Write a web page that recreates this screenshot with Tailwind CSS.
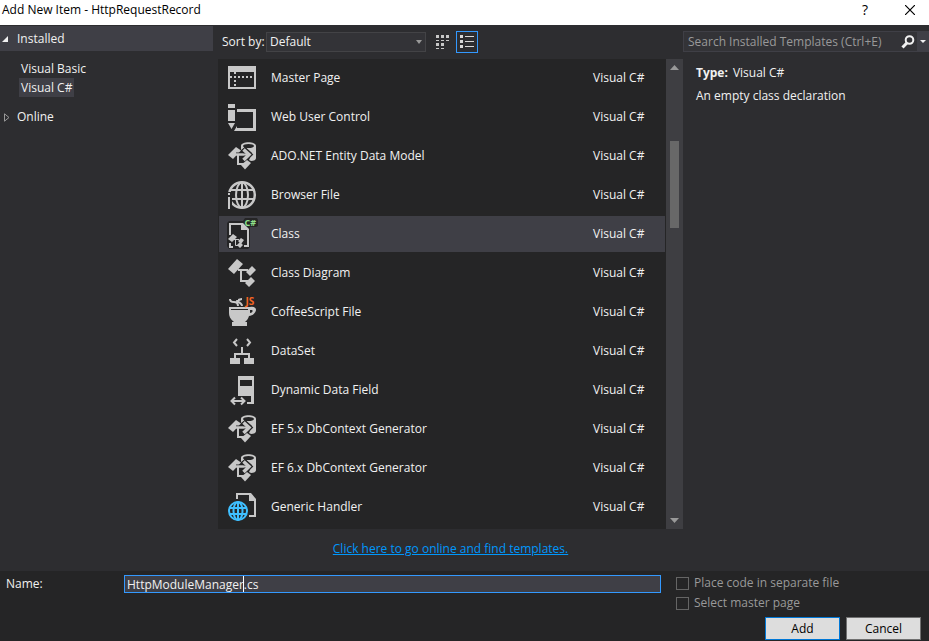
<!DOCTYPE html>
<html lang="en">
<head>
<meta charset="utf-8">
<title>Add New Item - HttpRequestRecord</title>
<script src="https://cdn.jsdelivr.net/npm/@tailwindcss/browser@4"></script>
</head>
<body class="min-h-screen flex flex-col bg-[#2d2d30] text-[#f1f1f1] text-[12px] leading-4 font-['Segoe_UI','Open_Sans',sans-serif]">

<svg class="hidden" aria-hidden="true">
  <symbol id="i-master" viewBox="0 0 32 32">
    <path fill="#c8c8c8" fill-rule="evenodd" d="M2 4h28v23H2zM4 10v15h24V10z"/>
    <path fill="#c8c8c8" d="M4 14h2v2H4zM8 10h2v2H8zM8 14h2v2H8zM8 18h2v2H8zM8 22h2v2H8zM12 14h2v2h-2zM16 14h2v2h-2zM20 14h2v2h-2zM24 14h2v2h-2z"/>
  </symbol>
  <symbol id="i-control" viewBox="0 0 32 32">
    <path fill="#c8c8c8" d="M2 3h7v4H2zM2 9h7v11H2zM2 22h7l-3.500 6zM11 8h19v22H8l3-5v2h16V11H11z"/>
  </symbol>
  <symbol id="i-entity" viewBox="0 0 32 32">
    <path fill="#c8c8c8" d="M15 6c0-5 15-5 15 0v12c0 2-2 3-5 3l-2-1 3-7-7-6-4 3z"/>
    <ellipse cx="22.500" cy="6" rx="5.500" ry="2" fill="#252526"/>
    <path d="M2 15l8-8 5 3.500-8 8.500z" fill="#c8c8c8"/>
    <path d="M10 15h12" fill="none" stroke="#252526" stroke-width="5"/>
    <path d="M10 14.500h12M12 15v9h6" fill="none" stroke="#c8c8c8" stroke-width="2"/>
    <path d="M17 9l6 5.500-6 6" fill="none" stroke="#252526" stroke-width="6"/>
    <path d="M17.500 9.500l5.500 5-5.500 5.500" fill="none" stroke="#c8c8c8" stroke-width="3.500"/>
    <path d="M10 14.500h11" fill="none" stroke="#c8c8c8" stroke-width="2"/>
    <path d="M15 25l6-5 4 3-6 6.500z" fill="#c8c8c8"/>
  </symbol>
  <symbol id="i-globe-i" viewBox="0 0 32 32">
    <g fill="none" stroke="#c8c8c8" stroke-width="2">
      <circle cx="16" cy="16" r="12.800" stroke-width="2.500"/><ellipse cx="16" cy="16" rx="6" ry="12.500"/>
      <path d="M16 3v26M5 11h22M5 20h22"/>
    </g>
    <path fill="#252526" d="M0 13h6v17H0z"/>
    <path fill="#c8c8c8" d="M2 14h2v2H2zM2 18h2v12H2z"/>
  </symbol>
  <symbol id="i-class" viewBox="0 0 32 32">
    <path fill="#252526" d="M3 3h14l2-3h12l1 2v6l-2 1h-6v20l-2 2H3l-2-3V5z"/>
    <path fill="none" stroke="#c8c8c8" stroke-width="2" d="M4 17V6h12M22 12v16h-4M4 25v4h3"/>
    <path fill="#c8c8c8" d="M15 5h2l6 6v1h-8z"/>
    <path fill="#c8c8c8" d="M2 21l5-5 4 3-5 5zM12 23l3-3 3 2-3 4zM11 27l3-3 3 3-3 3z"/>
    <path fill="none" stroke="#c8c8c8" d="M8 21.500h5M9.500 21v6.500h3"/>
    <text x="18.500" y="8" font-size="9" font-weight="bold" font-family="Open Sans, sans-serif" fill="#8ee08a">C#</text>
  </symbol>
  <symbol id="i-diagram" viewBox="0 0 32 32">
    <path fill="#c8c8c8" d="M2 12l9-10 6 5-9 10zM20 15l6-6 4 4-6 6zM19 26l6-6 4 4-6 6z"/>
    <path fill="none" stroke="#c8c8c8" stroke-width="2" d="M12 13h10M15 13v11h7"/>
  </symbol>
  <symbol id="i-coffee" viewBox="0 0 32 32">
    <path fill="#c8c8c8" fill-rule="evenodd" d="M3 11h21c4-1 6 1 6 3s-3 6-7 6c-1 3-2 4-4 6h2v4H6v-4h2C4 23 3 20 3 17zM5 13v1h17v-1zM24 14v3c3 0 3-3 2-3z"/>
    <path fill="none" stroke="#c8c8c8" stroke-width="2" d="M4 3c0 3 2 3 4 3s4 1 4 4M11 4c0 2 2 2 3 3s2 1 2 3M16 3c-2 0-2 1-4 1"/>
    <text x="19.500" y="9" font-size="10" font-weight="bold" font-family="Open Sans, sans-serif" fill="#f26522">JS</text>
  </symbol>
  <symbol id="i-dataset" viewBox="0 0 32 32">
    <path fill="none" stroke="#c8c8c8" stroke-width="2" d="M11 4L8 7.500l3 3.500M21 4l3 3.500-3 3.500M16 12v7M9 24v-5h14v5"/>
    <path fill="#c8c8c8" d="M4 23h10v6H4zM18 23h10v6H18z"/>
  </symbol>
  <symbol id="i-field" viewBox="0 0 32 32">
    <path fill="#c8c8c8" fill-rule="evenodd" d="M12 2h16v28h-7v-2h4v-6H12zM14 6v6h12V6z"/>
    <path fill="none" stroke="#c8c8c8" stroke-width="2" d="M6 27h12M9 23.500L5.500 27 9 30.500M15 23.500l3.500 3.500-3.500 3.500"/>
  </symbol>
  <symbol id="i-handler" viewBox="0 0 32 32">
    <path fill="none" stroke="#c8c8c8" stroke-width="2" d="M11 8V3h13M29 9v16h-6"/>
    <path fill="#c8c8c8" d="M23 2h2l5 6v2h-7z"/>
    <circle cx="12" cy="20" r="9" fill="#252526" stroke="#3fbfff" stroke-width="2"/>
    <g fill="none" stroke="#3fbfff" stroke-width="2"><ellipse cx="12" cy="20" rx="4.500" ry="9"/><path d="M12 11v18M4 17h16M4 23h16"/></g>
  </symbol>
</svg>

<header class="h-[25px] shrink-0 flex items-center bg-white text-black pl-[2px] pr-[14px] pb-[5px]">
  <h1 class="grow">Add New Item - HttpRequestRecord</h1>
  <button aria-label="Help" class="w-4 mr-8 text-[14px]">?</button>
  <button aria-label="Close"><svg class="size-[10px]" viewBox="0 0 10 10" stroke="#000" stroke-width="1.200"><path d="M0 0l10 10M10 0L0 10"/></svg></button>
</header>

<main class="grow grid grid-cols-[213px_minmax(0,1fr)_246px]">
  <nav aria-label="Template categories" class="pt-px">
    <button class="w-full h-[25px] flex items-center gap-[9px] bg-[#3f3f46] pl-[2px] pt-px"><svg class="size-[6px]" viewBox="0 0 6 6"><path fill="#f1f1f1" d="M6 0v6H0z"/></svg>Installed</button>
    <ul class="pt-2 pl-[19px]">
      <li><button class="h-[19px] px-[2px]">Visual Basic</button></li>
      <li><button class="h-[19px] px-[2px] bg-[#3f3f46] flex items-center">Visual C#</button></li>
    </ul>
    <button class="mt-2 h-6 flex items-center gap-[7px] pl-[4px]"><svg class="w-[6px] h-[9px]" viewBox="0 0 6 9"><path fill="none" stroke="#999" d="M.5.800v7.400L5 4.500z"/></svg>Online</button>
  </nav>

  <section class="pl-[5px] flex flex-col">
    <div class="h-[34px] flex items-center pl-1">
      <label for="sort" class="w-11 whitespace-nowrap">Sort by:</label>
      <div class="relative">
        <select id="sort" class="appearance-none block w-[160px] h-5 border border-[#434346] bg-[#333337] pl-[3px] leading-4"><option>Default</option></select>
        <svg class="absolute right-1 top-2 w-[6px] h-[4px] pointer-events-none" viewBox="0 0 6 4"><path fill="#999" d="M0 0h6L3 4z"/></svg>
      </div>
      <button aria-label="Small icons" class="ml-[10px]"><svg class="w-[14px] h-[15px]" viewBox="0 0 14 15" fill="#c8c8c8"><path d="M0 0h3v3H0zM5 0h3v3H5zM10 0h3v3h-3zM0 5h3v1H0zM5 5h3v1H5zM10 5h3v1h-3zM0 8h3v3H0zM5 8h3v3H5zM0 13h3v1H0zM5 13h3v1H5z"/></svg></button>
      <button aria-label="Medium icons" class="ml-[6px] size-[22px] border border-[#3399ff] grid place-items-center"><svg class="w-[14px] h-[14px]" viewBox="0 0 14 14" fill="#d8d8d8"><path d="M0 0h3v3H0zM0 5h3v3H0zM0 10h3v3H0zM5 1h9v1H5zM5 6h9v1H5zM5 11h9v1H5z"/></svg></button>
    </div>
    <div class="flex bg-[#252526]">
      <ul role="listbox" aria-label="Templates" class="grow flex flex-col gap-[3px] pt-px pb-[4px] pl-px pr-px
        *:h-9 *:flex *:items-center *:gap-[13px] *:pl-[7px]">
        <li role="option"><svg class="size-8"><use href="#i-master"/></svg><span class="grow">Master Page</span><span class="w-[72px]">Visual C#</span></li>
        <li role="option"><svg class="size-8"><use href="#i-control"/></svg><span class="grow">Web User Control</span><span class="w-[72px]">Visual C#</span></li>
        <li role="option"><svg class="size-8"><use href="#i-entity"/></svg><span class="grow">ADO.NET Entity Data Model</span><span class="w-[72px]">Visual C#</span></li>
        <li role="option"><svg class="size-8"><use href="#i-globe-i"/></svg><span class="grow">Browser File</span><span class="w-[72px]">Visual C#</span></li>
        <li role="option" aria-selected="true" class="bg-[#3f3f46]"><svg class="size-8"><use href="#i-class"/></svg><span class="grow">Class</span><span class="w-[72px]">Visual C#</span></li>
        <li role="option"><svg class="size-8"><use href="#i-diagram"/></svg><span class="grow">Class Diagram</span><span class="w-[72px]">Visual C#</span></li>
        <li role="option"><svg class="size-8"><use href="#i-coffee"/></svg><span class="grow">CoffeeScript File</span><span class="w-[72px]">Visual C#</span></li>
        <li role="option"><svg class="size-8"><use href="#i-dataset"/></svg><span class="grow">DataSet</span><span class="w-[72px]">Visual C#</span></li>
        <li role="option"><svg class="size-8"><use href="#i-field"/></svg><span class="grow">Dynamic Data Field</span><span class="w-[72px]">Visual C#</span></li>
        <li role="option"><svg class="size-8"><use href="#i-entity"/></svg><span class="grow">EF 5.x DbContext Generator</span><span class="w-[72px]">Visual C#</span></li>
        <li role="option"><svg class="size-8"><use href="#i-entity"/></svg><span class="grow">EF 6.x DbContext Generator</span><span class="w-[72px]">Visual C#</span></li>
        <li role="option"><svg class="size-8"><use href="#i-handler"/></svg><span class="grow">Generic Handler</span><span class="w-[72px]">Visual C#</span></li>
      </ul>
      <div class="w-[17px] bg-[#3e3e42] flex flex-col items-center py-[6px]">
        <svg class="w-[9px] h-[5px]" viewBox="0 0 9 5"><path fill="#999" d="M0 5h9L4.500 0z"/></svg>
        <div class="mt-[71px] w-[9px] h-[87px] bg-[#686868]"></div>
        <svg class="mt-auto w-[9px] h-[5px]" viewBox="0 0 9 5"><path fill="#999" d="M0 0h9L4.500 5z"/></svg>
      </div>
    </div>
    <p class="pt-3 pb-[14px] text-center"><a href="#" class="text-[#0097fb] underline">Click here to go online and find templates.</a></p>
  </section>

  <aside class="pt-[6px]">
    <div class="h-[21px] flex border border-r-0 border-[#3f3f46] bg-[#333337]">
      <input type="search" aria-label="Search Installed Templates" placeholder="Search Installed Templates (Ctrl+E)" class="grow min-w-0 pl-1 placeholder:text-[#999999] outline-none">
      <button aria-label="Search" class="w-[18px] grid place-items-center"><svg class="size-[14px]" viewBox="0 0 14 14" fill="none" stroke="#f1f1f1"><circle cx="8.500" cy="5" r="3.800" stroke-width="2"/><path stroke-width="3" d="M5.800 8L1.500 12.500"/></svg></button>
      <button aria-label="Search options" class="w-3 bg-[#3f3f46] grid place-items-center"><svg class="w-[6px] h-[3px]" viewBox="0 0 6 3"><path fill="#f1f1f1" d="M0 0h6L3 3z"/></svg></button>
    </div>
    <div class="pl-[13px] pt-[13px] flex flex-col gap-[7px]">
      <p><b class="mr-[5px]">Type:</b>Visual C#</p>
      <p>An empty class declaration</p>
    </div>
  </aside>
</main>

<footer class="shrink-0 bg-[#252526] pl-[6px] pr-2 pt-1 pb-px">
  <div class="flex items-start">
    <label for="name" class="w-[118px] leading-[18px]">Name:</label>
    <div class="relative grow">
      <input id="name" value="HttpModuleManager.cs" class="block w-full h-[18px] border border-[#3399ff] bg-[#3f3f46] pl-[2px] leading-4 outline-none">
      <span class="absolute left-[119px] top-px w-px h-4 bg-white"></span>
    </div>
    <div class="w-[260px] pl-[15px] flex flex-col gap-1 text-[#999999]">
      <label class="flex items-center gap-[5px]"><input type="checkbox" disabled class="appearance-none size-[13px] border border-[#656565]">Place code in separate file</label>
      <label class="flex items-center gap-[5px]"><input type="checkbox" disabled class="appearance-none size-[13px] border border-[#656565]">Select master page</label>
    </div>
  </div>
  <div class="mt-[6px] flex justify-end gap-[6px] text-black">
    <button class="w-[75px] h-[23px] border border-[#0078d7] bg-[#dddddd]">Add</button>
    <button class="w-[75px] h-[23px] border border-[#707070] bg-[#dddddd]">Cancel</button>
  </div>
</footer>
</body>
</html>
